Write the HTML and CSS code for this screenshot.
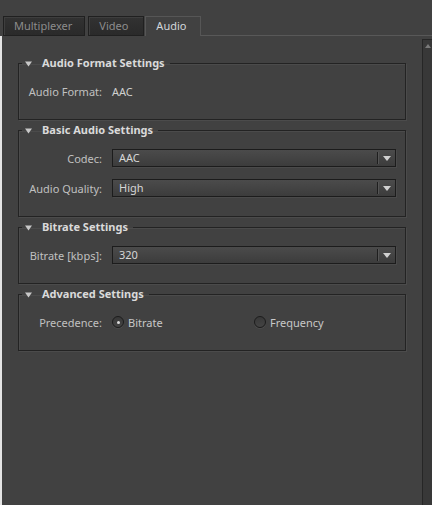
FILE: index.html
```html
<!DOCTYPE html>
<html>
<head>
<meta charset="utf-8">
<link rel="stylesheet" href="styles.css">
</head>
<body>
<div class="window">
  <div class="tabbar">
    <div class="tab">Multiplexer</div>
    <div class="tab">Video</div>
    <div class="tab active">Audio</div>
    <div class="tabline"></div>
  </div>
  <div class="body">
    <div class="content">
      <fieldset class="group">
        <legend><svg class="tri" width="7" height="6" viewBox="0 0 7 6"><path d="M0 0.5 H7 L3.5 5.5 Z"/></svg>Audio Format Settings</legend>
        <div class="rows">
          <div class="row"><span class="label">Audio Format:</span><span class="value">AAC</span></div>
        </div>
      </fieldset>
      <fieldset class="group">
        <legend><svg class="tri" width="7" height="6" viewBox="0 0 7 6"><path d="M0 0.5 H7 L3.5 5.5 Z"/></svg>Basic Audio Settings</legend>
        <div class="rows">
          <div class="row"><span class="label">Codec:</span>
            <div class="select"><span class="select-value">AAC</span><span class="divider"></span><span class="select-arrow"><svg width="8" height="5" viewBox="0 0 8 5"><path d="M0 0 H8 L4 5 Z"/></svg></span></div>
          </div>
          <div class="row"><span class="label">Audio Quality:</span>
            <div class="select"><span class="select-value">High</span><span class="divider"></span><span class="select-arrow"><svg width="8" height="5" viewBox="0 0 8 5"><path d="M0 0 H8 L4 5 Z"/></svg></span></div>
          </div>
        </div>
      </fieldset>
      <fieldset class="group">
        <legend><svg class="tri" width="7" height="6" viewBox="0 0 7 6"><path d="M0 0.5 H7 L3.5 5.5 Z"/></svg>Bitrate Settings</legend>
        <div class="rows">
          <div class="row"><span class="label">Bitrate [kbps]:</span>
            <div class="select"><span class="select-value">320</span><span class="divider"></span><span class="select-arrow"><svg width="8" height="5" viewBox="0 0 8 5"><path d="M0 0 H8 L4 5 Z"/></svg></span></div>
          </div>
        </div>
      </fieldset>
      <fieldset class="group">
        <legend><svg class="tri" width="7" height="6" viewBox="0 0 7 6"><path d="M0 0.5 H7 L3.5 5.5 Z"/></svg>Advanced Settings</legend>
        <div class="rows">
          <div class="row"><span class="label">Precedence:</span>
            <div class="radios">
              <span class="option"><span class="radio checked"></span>Bitrate</span>
              <span class="option"><span class="radio"></span>Frequency</span>
            </div>
          </div>
        </div>
      </fieldset>
    </div>
    <div class="scrollbar"><div class="scroll-up"></div></div>
  </div>
</div>
</body>
</html>
```

FILE: styles.css
```css
html, body {
  margin: 0;
  padding: 0;
  background: #414141;
}
body {
  font-family: "Noto Sans", "Open Sans", sans-serif;
  font-size: 11px;
  color: #c2c2c2;
}
.window {
  width: 432px;
  height: 505px;
  display: flex;
  flex-direction: column;
  overflow: hidden;
}
.tabbar {
  display: flex;
  align-items: flex-end;
  height: 36px;
  padding-left: 3px;
  box-sizing: border-box;
  flex: none;
}
.tab {
  height: 20px;
  min-width: 56px;
  box-sizing: border-box;
  padding: 0 12px 0 10px;
  line-height: 17px;
  border: 1px solid #202020;
  box-shadow: inset 1px 1px 0 #3e3e3e;
  background: linear-gradient(#323232, #2a2a2a);
  color: #8c8c8c;
  margin-right: 3px;
}
.tab.active {
  border-color: #565656;
  border-bottom: 0;
  box-shadow: none;
  background: #414141;
  color: #d2d6da;
  margin-right: 0;
  margin-left: -2px;
  line-height: 18px;
}
.tabline {
  flex: 1;
  align-self: stretch;
  border-bottom: 1px solid #585858;
}
.body {
  flex: 1;
  display: flex;
  min-height: 0;
}
.content {
  flex: 1;
  border-left: 2px solid #e4e4e4;
  padding: 20px 16px 0;
}
.scrollbar {
  width: 10px;
  margin-top: 3px;
  border-top: 1px solid #262626;
  border-left: 1px solid #262626;
  background: #383838;
}
.scroll-up {
  width: 0;
  height: 0;
  margin: 4px auto 0;
  border-left: 3px solid transparent;
  border-right: 3px solid transparent;
  border-bottom: 4px solid #7a7a7a;
}
.group {
  margin: 0 0 3px;
  border: 1px solid #232323;
  box-shadow: 1px 1px 0 #4b4b4b, inset 1px 1px 0 #4b4b4b;
  padding: 12px 9px 19px 0;
  min-width: 0;
}
.group legend {
  margin-left: 3px;
  padding: 0 5px 0 3px;
  font-weight: bold;
  color: #dadada;
  line-height: 14px;
}
.tri {
  fill: #c8c8c8;
  margin-right: 10px;
  vertical-align: 0;
}
.rows {
  display: flex;
  flex-direction: column;
  gap: 12px;
}
.row {
  display: grid;
  grid-template-columns: 83px 1fr;
  column-gap: 10px;
  align-items: center;
  height: 18px;
}
.label {
  text-align: right;
  color: #c0c0c0;
}
.value {
  color: #cfcfcf;
}
.select {
  display: flex;
  height: 18px;
  box-sizing: border-box;
  border: 1px solid #1c1c1c;
  background: linear-gradient(#4b4b4b, #3c3c3c);
  box-shadow: 1px 1px 0 #4a4a4a;
}
.select-value {
  flex: 1;
  padding-left: 6px;
  line-height: 16px;
  color: #d6d6d6;
}
.divider {
  width: 1px;
  margin: 2px 0;
  background: #1e1e1e;
  box-shadow: 1px 0 0 #555;
}
.select-arrow {
  width: 17px;
  display: flex;
  align-items: center;
  justify-content: center;
}
.select-arrow svg {
  fill: #d0d0d0;
}
.radios {
  display: flex;
  align-items: center;
}
.option {
  display: inline-flex;
  align-items: center;
  gap: 4px;
  width: 142px;
  color: #c8c8c8;
}
.radio {
  width: 12px;
  height: 12px;
  box-sizing: border-box;
  border-radius: 50%;
  border: 1px solid #1c1c1c;
  background: linear-gradient(#383838, #444);
  box-shadow: 0 1px 0 #4c4c4c;
  display: flex;
  align-items: center;
  justify-content: center;
}
.radio.checked::after {
  content: "";
  width: 3px;
  height: 3px;
  border-radius: 50%;
  background: #dcdcdc;
}
```
